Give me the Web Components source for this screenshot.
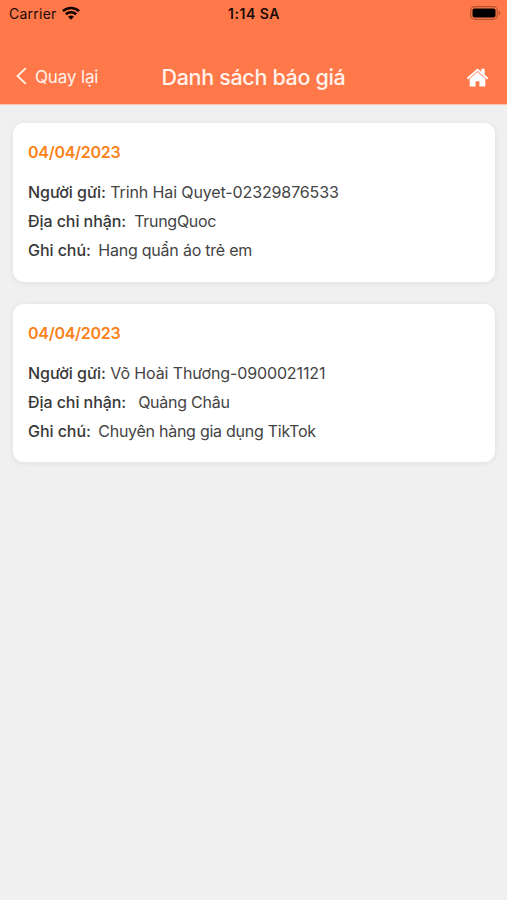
<!DOCTYPE html>
<html lang="vi">
<head>
<meta charset="utf-8">
<title>Danh sách báo giá</title>
<style>
html,body{margin:0;height:100%;background:#f0f0f0}
body{font-family:Inter,"Liberation Sans",sans-serif}
</style>
</head>
<body>
<quote-screen>
  <status-bar slot="top"></status-bar>
  <nav-bar slot="top"><span slot="back">Quay lại</span>Danh sách báo giá</nav-bar>
  <quote-card date="04/04/2023">
    <quote-field label="Người gửi:" style="--gap:4.5px;--ls:-.12px">Trinh Hai Quyet-02329876533</quote-field>
    <quote-field label="Địa chỉ nhận:" style="--gap:8px;--ls:-.28px">TrungQuoc</quote-field>
    <quote-field label="Ghi chú:" style="--gap:7.5px;--ls:-.22px">Hang quẩn áo trẻ em</quote-field>
  </quote-card>
  <quote-card date="04/04/2023">
    <quote-field label="Người gửi:" style="--gap:4.5px;--ls:-.12px">Võ Hoài Thương-0900021121</quote-field>
    <quote-field label="Địa chỉ nhận:" style="--gap:12px;--ls:-.25px">Quảng Châu</quote-field>
    <quote-field label="Ghi chú:" style="--gap:7.5px;--ls:-.26px">Chuyên hàng gia dụng TikTok</quote-field>
  </quote-card>
</quote-screen>
<script>
const define = (name, html) => customElements.define(name, class extends HTMLElement {
  constructor() {
    super();
    const t = document.createElement('template');
    t.innerHTML = html;
    this.attachShadow({mode: 'open'}).append(t.content.cloneNode(true));
  }
  connectedCallback() {
    this.shadowRoot.querySelectorAll('[data-attr]').forEach(n => {
      n.textContent = this.getAttribute(n.dataset.attr);
    });
  }
});

define('quote-screen', `<style>
:host{display:flex;flex-direction:column;min-height:100vh;background:#f0f0f0}
header{display:flex;flex-direction:column;justify-content:space-between;background:#ff784a;height:104px;box-shadow:0 1px 0 #f8c3ae}
main{display:flex;flex-direction:column;gap:22px;padding:19px 12px 0 13px}
</style><header><slot name="top"></slot></header><main><slot></slot></main>`);

define('status-bar', `<style>
:host{display:grid;grid-template-columns:1fr auto 1fr;align-items:center;height:27px;padding:0 6px 0 9px;color:#1b0b06;font-size:14px}
.l{display:flex;align-items:center;gap:5px;letter-spacing:.25px}
.t{font-weight:600;letter-spacing:.5px;margin-right:2px}
.r{justify-self:end;display:flex}
svg{display:block}
.l svg{margin-top:-2px}
.r svg{margin-top:-1px}
</style><div class="l"><span>Carrier</span><svg width="18" height="14" viewBox="0 0 18 14" fill="none" stroke="#140400" stroke-width="2.6"><path d="M.9 5.1C5.4.9 12.6.9 17.1 5.1M3.8 8.2c2.9-2.7 7.5-2.7 10.4 0"/><path d="M9 13.7 6 10.7c1.7-1.5 4.3-1.5 6 0Z" fill="#140400" stroke="none"/></svg></div>
<div class="t">1:14 SA</div>
<div class="r"><svg width="31" height="14" viewBox="0 0 31 14"><rect x=".7" y=".7" width="26.6" height="12.6" rx="3.8" fill="none" stroke="#b65130" stroke-width="1.2"/><rect x="2.5" y="2.5" width="23" height="9" rx="2" fill="#000"/><path d="M28.7 4.6c2.1.8 2.1 4 0 4.8Z" fill="#b65130"/></svg></div>`);

define('nav-bar', `<style>
:host{display:grid;grid-template-columns:1fr auto 1fr;align-items:center;height:54px;padding:0 18px 0 16px;color:#fff3ec}
.b{display:flex;align-items:center;gap:8px;font-size:17px;letter-spacing:-.15px}
h1{margin:0 0 0 2px;font-size:21.5px;line-height:26px;font-weight:450;letter-spacing:-.33px}
.h{justify-self:end}
svg{display:block}
.b svg{margin-top:-2px}
</style><div class="b"><svg width="11" height="18" viewBox="0 0 11 18" fill="none" stroke="#fff3ec" stroke-width="1.8"><path d="M9.8 1.2 1.5 9l8.3 7.8"/></svg><slot name="back"></slot></div>
<h1><slot></slot></h1>
<div class="h"><svg width="23" height="19" viewBox="0 0 22 19" fill="#fff"><path d="M11 .4 14.8 3.8V.8h3.4v6l3.6 3.2-1.2 1.5L11 2.9 1.4 11.5.2 10Z"/><path d="m11 3.9 7.8 6.9v7.7h-5.9v-5.3H9.1v5.3H3.2V10.8Z"/></svg></div>`);

define('quote-card', `<style>
:host{display:block;box-sizing:border-box;height:158.5px;padding:19px 15px;background:#fff;border-radius:11px;box-shadow:0 1px 7px rgba(0,0,0,.07)}
.d{font-size:16px;line-height:20px;font-weight:600;color:#fa8219;margin-bottom:16px;letter-spacing:-.28px}
</style><div class="d" data-attr="date"></div><slot></slot>`);

define('quote-field', `<style>
:host{display:flex;gap:var(--gap);height:29px;line-height:29px;font-size:16px;color:#444;white-space:nowrap}
b{font-weight:500;color:#383838;letter-spacing:-.06px}
span{letter-spacing:var(--ls,0)}
</style><b data-attr="label"></b><span><slot></slot></span>`);
</script>
</body>
</html>
